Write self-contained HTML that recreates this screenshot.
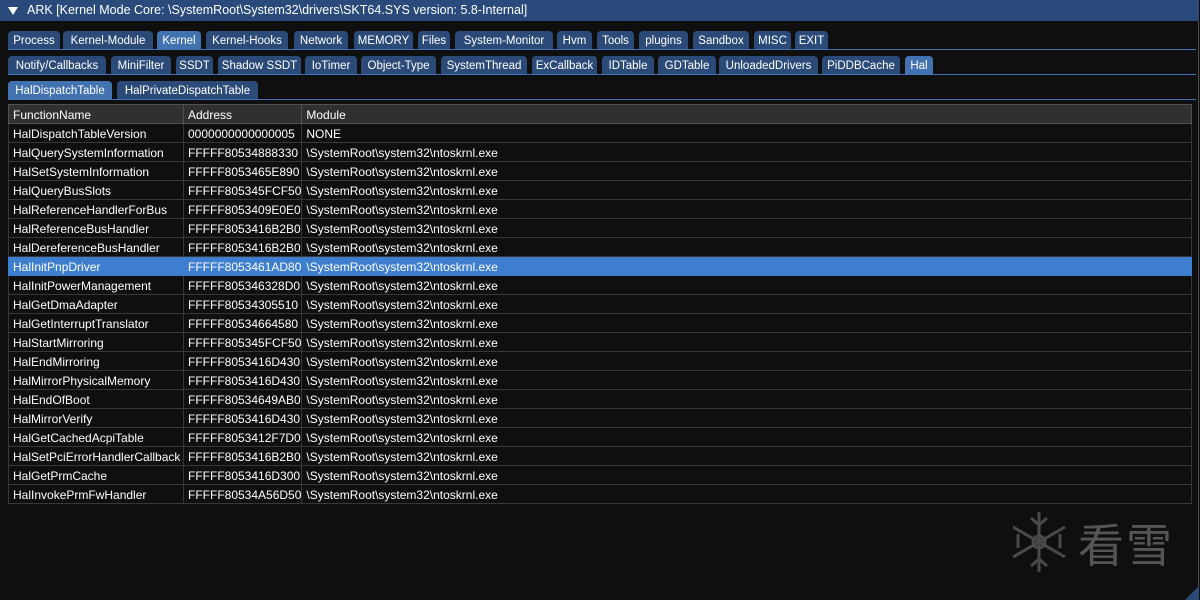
<!DOCTYPE html>
<html><head><meta charset="utf-8"><style>
*{margin:0;padding:0;box-sizing:border-box}
body{width:1200px;height:600px;background:#0f0f0f;position:relative;overflow:hidden;font-family:"Liberation Sans","Noto Sans CJK SC",sans-serif;font-size:12px;color:#fff}
.win{position:absolute;left:0;top:0;width:1199px;height:600px;border-right:1px solid #4a4a4f;border-top:1px solid #4a4a4f}
.title{position:absolute;left:0;top:0;width:1199px;height:21px;background:#294a7a;line-height:21px;padding-left:27px;font-size:12.5px;color:#fff}
.tri{position:absolute;left:8px;top:7px;width:0;height:0;border-left:5px solid transparent;border-right:5px solid transparent;border-top:8px solid #fff}
.tab{position:absolute;height:18px;background:#2b4a78;border-radius:4px 4px 0 0;line-height:20px;text-align:center;font-size:11.5px;color:#fff;white-space:nowrap;overflow:hidden}
.tab.a{background:#4272b0}
.line{position:absolute;left:8px;width:1188px;height:1px;background:#3f72b8}
table{position:absolute;left:8px;top:104px;width:1184px;border-collapse:collapse;border:1px solid #505055}
td,th{height:19px;border:1px solid #38383a;padding:1px 0 0 4px;font-weight:normal;text-align:left;white-space:nowrap;font-size:12px;color:#fff}
th{background:#303030;border-color:#505055}
tr.sel td{background:#3d7ecf;border-color:#3d7ecf}
.logo{position:absolute;color:#555;letter-spacing:2px}
.grip{position:absolute;right:1px;bottom:0;width:0;height:0;border-left:14px solid transparent;border-bottom:14px solid #2b4a78}
</style></head><body>
<div class="win"></div>
<div class="title"><div class="tri"></div>ARK [Kernel Mode Core: \SystemRoot\System32\drivers\SKT64.SYS version: 5.8-Internal]</div>

<div class="tab" style="left:8px;top:31px;width:52px">Process</div>
<div class="tab" style="left:63px;top:31px;width:90px">Kernel-Module</div>
<div class="tab a" style="left:157px;top:31px;width:44px">Kernel</div>
<div class="tab" style="left:206px;top:31px;width:82px">Kernel-Hooks</div>
<div class="tab" style="left:294px;top:31px;width:54px">Network</div>
<div class="tab" style="left:354px;top:31px;width:59px">MEMORY</div>
<div class="tab" style="left:418px;top:31px;width:32px">Files</div>
<div class="tab" style="left:455px;top:31px;width:98px">System-Monitor</div>
<div class="tab" style="left:557px;top:31px;width:35px">Hvm</div>
<div class="tab" style="left:597px;top:31px;width:37px">Tools</div>
<div class="tab" style="left:639px;top:31px;width:49px">plugins</div>
<div class="tab" style="left:693px;top:31px;width:56px">Sandbox</div>
<div class="tab" style="left:754px;top:31px;width:37px">MISC</div>
<div class="tab" style="left:795px;top:31px;width:33px">EXIT</div>
<div class="line" style="top:49px"></div>

<div class="tab" style="left:8px;top:56px;width:98px">Notify/Callbacks</div>
<div class="tab" style="left:111px;top:56px;width:60px">MiniFilter</div>
<div class="tab" style="left:176px;top:56px;width:37px">SSDT</div>
<div class="tab" style="left:218px;top:56px;width:83px">Shadow SSDT</div>
<div class="tab" style="left:305px;top:56px;width:52px">IoTimer</div>
<div class="tab" style="left:361px;top:56px;width:75px">Object-Type</div>
<div class="tab" style="left:441px;top:56px;width:86px">SystemThread</div>
<div class="tab" style="left:532px;top:56px;width:65px">ExCallback</div>
<div class="tab" style="left:602px;top:56px;width:52px">IDTable</div>
<div class="tab" style="left:658px;top:56px;width:58px">GDTable</div>
<div class="tab" style="left:719px;top:56px;width:99px">UnloadedDrivers</div>
<div class="tab" style="left:822px;top:56px;width:78px">PiDDBCache</div>
<div class="tab a" style="left:905px;top:56px;width:28px">Hal</div>
<div class="line" style="top:74px"></div>

<div class="tab a" style="left:8px;top:81px;width:104px">HalDispatchTable</div>
<div class="tab" style="left:117px;top:81px;width:141px">HalPrivateDispatchTable</div>
<div class="line" style="top:99px"></div>

<table>
<colgroup><col style="width:175px"><col style="width:117px"><col></colgroup>
<tr><th>FunctionName</th><th>Address</th><th>Module</th></tr>
<tr><td>HalDispatchTableVersion</td><td>0000000000000005</td><td>NONE</td></tr>
<tr><td>HalQuerySystemInformation</td><td>FFFFF80534888330</td><td>\SystemRoot\system32\ntoskrnl.exe</td></tr>
<tr><td>HalSetSystemInformation</td><td>FFFFF8053465E890</td><td>\SystemRoot\system32\ntoskrnl.exe</td></tr>
<tr><td>HalQueryBusSlots</td><td>FFFFF805345FCF50</td><td>\SystemRoot\system32\ntoskrnl.exe</td></tr>
<tr><td>HalReferenceHandlerForBus</td><td>FFFFF8053409E0E0</td><td>\SystemRoot\system32\ntoskrnl.exe</td></tr>
<tr><td>HalReferenceBusHandler</td><td>FFFFF8053416B2B0</td><td>\SystemRoot\system32\ntoskrnl.exe</td></tr>
<tr><td>HalDereferenceBusHandler</td><td>FFFFF8053416B2B0</td><td>\SystemRoot\system32\ntoskrnl.exe</td></tr>
<tr class="sel"><td>HalInitPnpDriver</td><td>FFFFF8053461AD80</td><td>\SystemRoot\system32\ntoskrnl.exe</td></tr>
<tr><td>HalInitPowerManagement</td><td>FFFFF805346328D0</td><td>\SystemRoot\system32\ntoskrnl.exe</td></tr>
<tr><td>HalGetDmaAdapter</td><td>FFFFF80534305510</td><td>\SystemRoot\system32\ntoskrnl.exe</td></tr>
<tr><td>HalGetInterruptTranslator</td><td>FFFFF80534664580</td><td>\SystemRoot\system32\ntoskrnl.exe</td></tr>
<tr><td>HalStartMirroring</td><td>FFFFF805345FCF50</td><td>\SystemRoot\system32\ntoskrnl.exe</td></tr>
<tr><td>HalEndMirroring</td><td>FFFFF8053416D430</td><td>\SystemRoot\system32\ntoskrnl.exe</td></tr>
<tr><td>HalMirrorPhysicalMemory</td><td>FFFFF8053416D430</td><td>\SystemRoot\system32\ntoskrnl.exe</td></tr>
<tr><td>HalEndOfBoot</td><td>FFFFF80534649AB0</td><td>\SystemRoot\system32\ntoskrnl.exe</td></tr>
<tr><td>HalMirrorVerify</td><td>FFFFF8053416D430</td><td>\SystemRoot\system32\ntoskrnl.exe</td></tr>
<tr><td>HalGetCachedAcpiTable</td><td>FFFFF8053412F7D0</td><td>\SystemRoot\system32\ntoskrnl.exe</td></tr>
<tr><td>HalSetPciErrorHandlerCallback</td><td>FFFFF8053416B2B0</td><td>\SystemRoot\system32\ntoskrnl.exe</td></tr>
<tr><td>HalGetPrmCache</td><td>FFFFF8053416D300</td><td>\SystemRoot\system32\ntoskrnl.exe</td></tr>
<tr><td>HalInvokePrmFwHandler</td><td>FFFFF80534A56D50</td><td>\SystemRoot\system32\ntoskrnl.exe</td></tr>
</table>

<svg style="position:absolute;left:1010px;top:510px" width="58" height="64" viewBox="0 0 58 64" stroke="#4a4a4a" stroke-width="3" fill="none">
<line x1="29" y1="2" x2="29" y2="62"/><line x1="3" y1="17" x2="55" y2="47"/><line x1="3" y1="47" x2="55" y2="17"/>
<line x1="21" y1="8" x2="29" y2="15"/><line x1="37" y1="8" x2="29" y2="15"/>
<line x1="21" y1="56" x2="29" y2="49"/><line x1="37" y1="56" x2="29" y2="49"/>
<line x1="8" y1="24" x2="8" y2="38"/><line x1="50" y1="24" x2="50" y2="38"/>
<circle cx="29" cy="32" r="6"/>
</svg>
<div class="logo" style="left:1078px;top:510px;font-size:46px">看雪</div>
<div class="grip"></div>
</body></html>
